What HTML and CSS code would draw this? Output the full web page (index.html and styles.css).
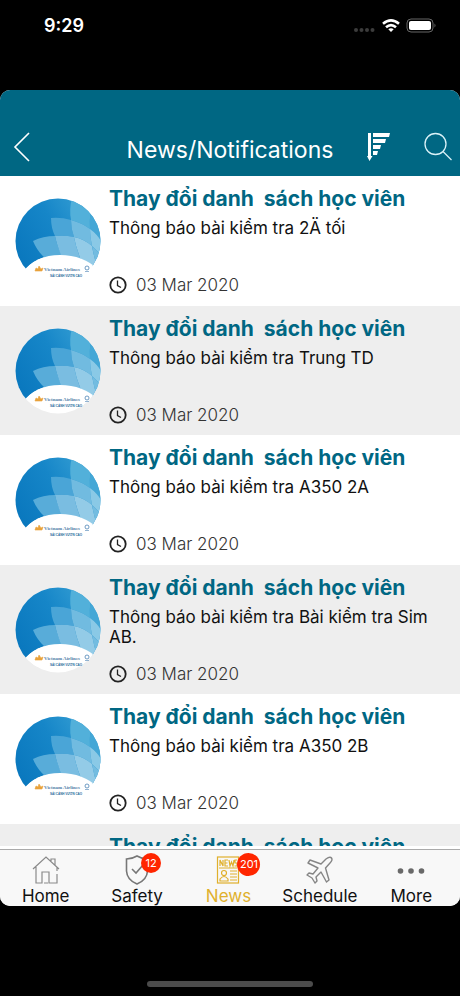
FILE: index.html
```html
<!DOCTYPE html>
<html lang="vi">
<head>
<meta charset="utf-8">
<meta name="viewport" content="width=device-width, initial-scale=1">
<title>News/Notifications</title>
<link rel="stylesheet" href="styles.css">
</head>
<body>
<svg class="defs" aria-hidden="true">
  <defs>
    <linearGradient id="sky" x1="0" y1="0.7" x2="1" y2="0.2">
      <stop offset="0" stop-color="#0a78be"/>
      <stop offset="0.5" stop-color="#1686c8"/>
      <stop offset="1" stop-color="#3ba3d6"/>
    </linearGradient>
    <clipPath id="disc"><circle cx="43" cy="43" r="42.500"/></clipPath>
  </defs>
  <symbol id="logo" viewBox="0 0 86 86">
    <circle cx="43" cy="43" r="42.500" fill="#fff"/>
    <g clip-path="url(#disc)">
      <path d="M0 0H86V74H84Q68 57 45 57Q21 57 8 74H0Z" fill="url(#sky)"/>
      <path d="M57 0Q54 11 56 22Q67 25 75 31Q74 16 78 0Z" fill="#52b0da"/>
      <path d="M78 0Q74 16 75 31Q82 36 86 43V0Z" fill="#44a7d6"/>
      <path d="M36 20Q46 19 56 22Q56 31 59 39Q50 37 40 38Q36 30 36 20Z" fill="#4aa5d7"/>
      <path d="M56 22Q67 25 75 31Q75 39 77 48Q69 41 59 39Q56 31 56 22Z" fill="#71bbe0"/>
      <path d="M75 31Q82 36 86 43V58Q82 52 77 48Q75 39 75 31Z" fill="#8ac9e6"/>
      <path d="M18 43Q28 38 40 38Q42 48 48 60H30Q22 53 18 43Z" fill="#58acd9"/>
      <path d="M40 38Q50 37 59 39Q61 50 66 62H48Q42 48 40 38Z" fill="#7abde1"/>
      <path d="M59 39Q69 41 77 48Q79 59 83 72L66 62Q61 50 59 39Z" fill="#93cbe7"/>
      <path d="M77 48Q82 52 86 58V74H83Q79 59 77 48Z" fill="#73bce0"/>
      <path d="M8 74Q21 57 45 57Q68 57 84 72L80 80H10Z" fill="#fff"/>
    </g>
    <path d="M20 73l1-3 2 1 1-3 2 3 2-1-1 3z" fill="#e9a23b" stroke="#e9a23b" stroke-width=".6"/>
    <circle cx="72" cy="70" r="2" fill="none" stroke="#4b83b5" stroke-width=".8"/>
    <path d="M70 73.500H74" stroke="#4b83b5" stroke-width=".6"/>
  </symbol>
  <symbol id="clock" viewBox="0 0 18 18">
    <circle cx="9" cy="9" r="7.700" fill="none" stroke="#222" stroke-width="1.800"/>
    <path d="M8.500 4.500V9.500L12 11.500" fill="none" stroke="#222" stroke-width="1.300"/>
  </symbol>
</svg>

<div class="phone">
  <div class="status">
    <span class="time">9:29</span>
    <svg class="signals" viewBox="0 0 84 18" aria-hidden="true">
      <g fill="#3c3c3c"><circle cx="3" cy="12" r="2"/><circle cx="8.500" cy="12" r="2"/><circle cx="14" cy="12" r="2"/><circle cx="19.500" cy="12" r="2"/></g>
      <g fill="none" stroke="#fff" stroke-width="2.600"><path d="M30 5.800Q38 -1 46 5.800M33 9.300Q38 5 43 9.300"/></g>
      <path d="M35.300 11.300Q38 9.300 40.700 11.300L38 14Z" fill="#fff"/>
      <rect x="54" y="1" width="26" height="13" rx="4" fill="none" stroke="#666"/>
      <rect x="56" y="3" width="22" height="9" rx="2" fill="#fff"/>
      <path d="M81.500 5.500q2 2 0 4z" fill="#666"/>
    </svg>
  </div>

  <div class="app">
    <header class="bar">
      <button class="icon-btn back" aria-label="Back">
        <svg width="18" height="30" viewBox="0 0 18 30"><path d="M16 1L2 15L16 29" fill="none" stroke="#fff" stroke-width="1.600"/></svg>
      </button>
      <h1>News/Notifications</h1>
      <button class="icon-btn" aria-label="Sort">
        <svg width="24" height="30" viewBox="0 0 24 30" fill="#fff"><path d="M1 1H4V24H5.500L2.500 29L0 24H1ZM6 1H23L22 5H6ZM6 7H19L18 11H6ZM6 13H14L13 17H6ZM6 19H11L10 23H6Z"/></svg>
      </button>
      <button class="icon-btn search" aria-label="Search">
        <svg width="28" height="30" viewBox="0 0 28 30" fill="none" stroke="#d9f1f7" stroke-width="1.300"><circle cx="11.500" cy="12" r="10.500"/><path d="M19 19.500L27.500 28"/></svg>
      </button>
    </header>

    <main class="list">
      <article class="row">
        <svg class="avatar" viewBox="0 0 86 86"><use href="#logo"/><text x="29" y="73" class="logo-name">Vietnam Airlines</text><text x="35" y="79" class="logo-tag">SẢI CÁNH VƯƠN CAO</text></svg>
        <div class="text"><h2>Thay đổi danh  sách học viên</h2><p>Thông báo bài kiểm tra 2Ä tối</p><div class="date"><svg class="clock" aria-hidden="true"><use href="#clock"/></svg><time datetime="2020-03-03">03 Mar 2020</time></div></div>
      </article>
      <article class="row">
        <svg class="avatar" viewBox="0 0 86 86"><use href="#logo"/><text x="29" y="73" class="logo-name">Vietnam Airlines</text><text x="35" y="79" class="logo-tag">SẢI CÁNH VƯƠN CAO</text></svg>
        <div class="text"><h2>Thay đổi danh  sách học viên</h2><p>Thông báo bài kiểm tra Trung TD</p><div class="date"><svg class="clock" aria-hidden="true"><use href="#clock"/></svg><time datetime="2020-03-03">03 Mar 2020</time></div></div>
      </article>
      <article class="row">
        <svg class="avatar" viewBox="0 0 86 86"><use href="#logo"/><text x="29" y="73" class="logo-name">Vietnam Airlines</text><text x="35" y="79" class="logo-tag">SẢI CÁNH VƯƠN CAO</text></svg>
        <div class="text"><h2>Thay đổi danh  sách học viên</h2><p>Thông báo bài kiểm tra A350 2A</p><div class="date"><svg class="clock" aria-hidden="true"><use href="#clock"/></svg><time datetime="2020-03-03">03 Mar 2020</time></div></div>
      </article>
      <article class="row">
        <svg class="avatar" viewBox="0 0 86 86"><use href="#logo"/><text x="29" y="73" class="logo-name">Vietnam Airlines</text><text x="35" y="79" class="logo-tag">SẢI CÁNH VƯƠN CAO</text></svg>
        <div class="text"><h2>Thay đổi danh  sách học viên</h2><p>Thông báo bài kiểm tra Bài kiểm tra Sim AB.</p><div class="date"><svg class="clock" aria-hidden="true"><use href="#clock"/></svg><time datetime="2020-03-03">03 Mar 2020</time></div></div>
      </article>
      <article class="row">
        <svg class="avatar" viewBox="0 0 86 86"><use href="#logo"/><text x="29" y="73" class="logo-name">Vietnam Airlines</text><text x="35" y="79" class="logo-tag">SẢI CÁNH VƯƠN CAO</text></svg>
        <div class="text"><h2>Thay đổi danh  sách học viên</h2><p>Thông báo bài kiểm tra A350 2B</p><div class="date"><svg class="clock" aria-hidden="true"><use href="#clock"/></svg><time datetime="2020-03-03">03 Mar 2020</time></div></div>
      </article>
      <article class="row">
        <div class="avatar"></div>
        <div class="text"><h2>Thay đổi danh  sách học viên</h2></div>
      </article>
    </main>

    <nav class="tabs">
      <a href="#home">
        <svg width="28" height="30" viewBox="0 0 28 30" fill="none" stroke="#8a8a8a" stroke-width="1.200"><path d="M1 14L14 2L27 14M4 12V28H10V17H17V28H25V19M25 16V12M19 6V4H23V10M12 28H16"/></svg>
        <span>Home</span>
      </a>
      <a href="#safety">
        <span class="glyph"><svg width="24" height="30" viewBox="0 0 24 30" fill="none" stroke="#777" stroke-width="1.600"><path d="M12 1Q17 4 22.500 4V16Q22 25 12 29Q2 25 1.500 16V4Q7 4 12 1Z"/><path d="M7 14L11 18L18 10"/></svg><b class="badge">12</b></span>
        <span>Safety</span>
      </a>
      <a href="#news" class="active" aria-current="page">
        <span class="glyph"><svg width="24" height="30" viewBox="0 0 24 30" fill="none" stroke="#e0b02c" stroke-width="1.200"><rect x="1.500" y="2" width="21" height="26"/><path d="M4 11V5L7 11V5M12 5H9V11H12M9 8H11.500M13 5L14 11L15.500 7L17 11L18 5M21 5H19V8H21V11H18.500M3 13H21M14 16H21M14 19H21M14 22H21M14 25H21"/><circle cx="8" cy="18" r="2.500"/><path d="M4 26V24Q8 19 12 24V26Z"/></svg><b class="badge">201</b></span>
        <span>News</span>
      </a>
      <a href="#schedule">
        <svg width="28" height="30" viewBox="0 0 28 30" fill="none" stroke="#858585" stroke-width="1.400" stroke-linejoin="round"><path d="M15 9L20 4Q24 1 25.500 3Q27 5 24 8L19.500 13L23 25L20.500 27L15 17L10 22L11 26L9 28L6 23L1 20L3 18L7 19L12 13L2 8L4 5Z"/></svg>
        <span>Schedule</span>
      </a>
      <a href="#more">
        <svg width="28" height="30" viewBox="0 0 28 30" fill="#696969"><circle cx="3.500" cy="16" r="2.800"/><circle cx="14" cy="16" r="2.800"/><circle cx="24.500" cy="16" r="2.800"/></svg>
        <span>More</span>
      </a>
    </nav>
  </div>
  <div class="home-area"><div class="home-indicator"></div></div>
</div>
</body>
</html>
```
FILE: styles.css
```css
* { box-sizing: border-box; }
body { margin: 0; background: #000; font-family: Inter, "Noto Sans", sans-serif; color: #111; }
h1, h2, p { margin: 0; }
.defs { position: absolute; width: 0; height: 0; }
.logo-name { font: bold 5px "Liberation Serif", serif; fill: #527fa8; }
.logo-tag { font: bold 3px "Liberation Sans", sans-serif; fill: #24699b; }

.phone { height: 100vh; display: flex; flex-direction: column; }
.status { flex: none; height: 90px; padding: 16px 23px 0 44px; display: flex; justify-content: space-between; align-items: flex-start; color: #fff; }
.time { font-size: 18px; line-height: 20px; font-weight: 600; }
.signals { width: 84px; height: 18px; margin-top: 2px; }

.app { flex: 1; min-height: 0; display: flex; flex-direction: column; border-radius: 10px; overflow: hidden; background: #fff; }
.bar { flex: none; height: 86px; padding: 0 8px 12px 13px; display: flex; align-items: flex-end; background: #006783; color: #fff; }
.bar h1 { flex: 1; padding-left: 16px; text-align: center; font-size: 23px; line-height: 28px; font-weight: 400; }
.icon-btn { padding: 0; border: 0; background: none; display: flex; margin-bottom: 2px; }
.back { width: 64px; }
.search { margin-left: 33px; }

.list { flex: 1; min-height: 0; overflow: hidden; margin-bottom: 3px; }
.row { height: 129px; padding: 10px 16px 0 15px; display: flex; gap: 8px; }
.row:nth-child(odd) { height: 130px; }
.row:nth-child(even) { background: #eee; }
.avatar { flex: none; width: 86px; height: 86px; margin-top: 12px; }
.text { flex: 1; height: 109px; display: flex; flex-direction: column; }
.text h2 { font-size: 21px; line-height: 26px; font-weight: 700; color: #006783; white-space: pre; }
.text p { margin-top: 6px; font-size: 17px; line-height: 20px; }
.date { margin-top: auto; display: flex; align-items: center; gap: 9px; font-size: 17px; line-height: 20px; font-weight: 300; color: #333; }
.clock { width: 18px; height: 18px; }

.tabs { flex: none; height: 57px; padding-right: 3px; display: grid; grid-template-columns: repeat(5, 1fr); border-top: 1px solid #aaa; background: #f8f8f8; }
.tabs a { padding-top: 5px; display: flex; flex-direction: column; align-items: center; color: #111; text-decoration: none; font-size: 17px; line-height: 22px; }
.tabs .active { color: #e0b02c; }
.tabs svg { display: block; }
.glyph { position: relative; }
.badge { position: absolute; top: -2px; left: 16px; min-width: 20px; height: 20px; border-radius: 10px; background: #ff2600; color: #fff; font-size: 11px; line-height: 20px; font-weight: 400; text-align: center; }
.active .badge { left: 21px; width: 23px; height: 23px; border-radius: 12px; line-height: 23px; }

.home-area { flex: none; height: 90px; padding-bottom: 9px; display: flex; justify-content: center; align-items: flex-end; }
.home-indicator { width: 36%; height: 6px; border-radius: 3px; background: #4b4b4b; }
```
